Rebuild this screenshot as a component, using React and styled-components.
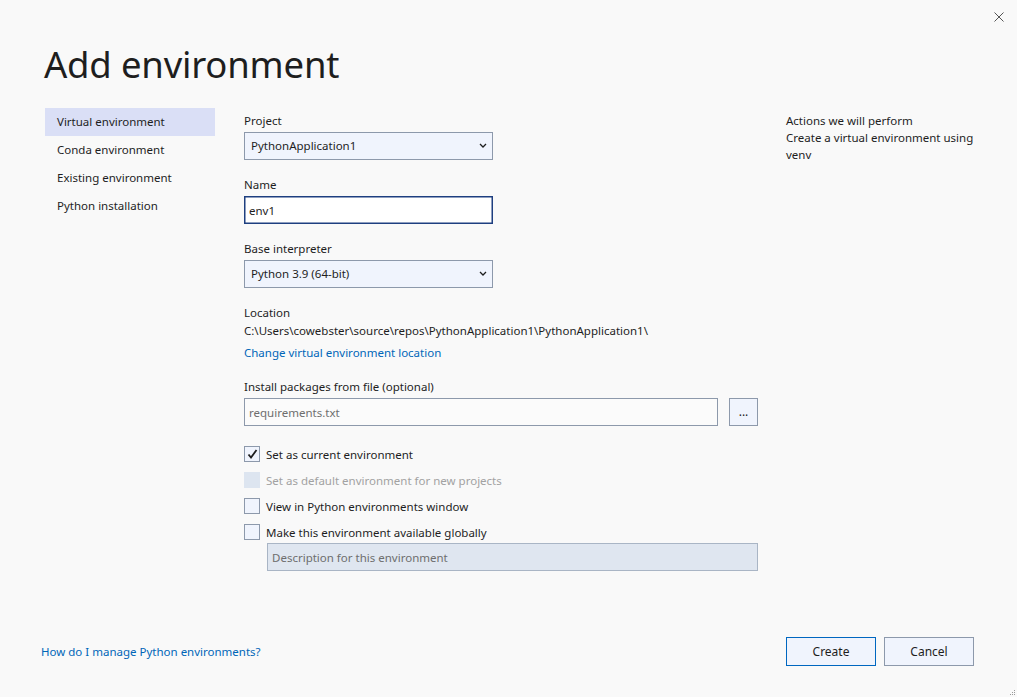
import React from "react";
import styled, { createGlobalStyle } from "styled-components";

const GlobalStyle = createGlobalStyle`
  html, body {
    margin: 0;
    padding: 0;
    background: #f9f9f9;
  }
  body {
    font-family: "Segoe UI", "Noto Sans", "Open Sans", sans-serif;
    color: #1e1e1e;
  }
`;

const Window = styled.div`
  position: relative;
  width: 1017px;
  height: 697px;
  box-sizing: border-box;
  display: flex;
  flex-direction: column;
  background: #f9f9f9;
  overflow: hidden;
  font-size: 11.5px;
`;

const TopBar = styled.div`
  height: 36px;
  display: flex;
  justify-content: flex-end;
  align-items: center;
  padding-right: 13px;
  padding-bottom: 2px;
  box-sizing: border-box;
`;

const CloseButton = styled.button`
  width: 10px;
  height: 10px;
  padding: 0;
  border: none;
  background: none;
  display: flex;
  cursor: pointer;
`;

const Title = styled.h1`
  margin: 5px 0 0 44px;
  font-size: 36.5px;
  font-weight: 400;
  line-height: 46px;
  height: 46px;
  color: #1e1e1e;
  letter-spacing: -0.2px;
`;

const Body = styled.div`
  display: flex;
  margin-top: 21px;
  padding-left: 45px;
`;

const Sidebar = styled.nav`
  width: 170px;
  display: flex;
  flex-direction: column;
`;

const NavItem = styled.div`
  height: 28px;
  line-height: 28px;
  padding-left: 12px;
  background: ${(p) => (p.$active ? "#dadff6" : "transparent")};
  color: #1e1e1e;
`;

const Form = styled.div`
  width: 514px;
  margin-left: 29px;
  display: flex;
  flex-direction: column;
  padding-top: 5px;
`;

const Group = styled.div`
  display: flex;
  flex-direction: column;
  margin-top: ${(p) => p.$top ?? 0}px;
  margin-bottom: ${(p) => p.$gap ?? 17}px;
`;

const Label = styled.div`
  line-height: 16px;
  margin-bottom: ${(p) => (p.$tight ? 0 : 3)}px;
`;

const Select = styled.div`
  width: 249px;
  height: 28px;
  box-sizing: border-box;
  border: 1px solid #8d99ab;
  background: #f0f4fd;
  display: flex;
  align-items: center;
  justify-content: space-between;
  padding: 0 5px 2px 6px;
`;

const TextInput = styled.div`
  width: ${(p) => p.$width}px;
  height: 28px;
  box-sizing: border-box;
  border: 1px solid ${(p) => (p.$focused ? "#1e3f80" : p.$disabled ? "#a9b5c5" : "#8d99ab")};
  ${(p) => p.$focused && "box-shadow: inset 0 0 0 0.5px #1e3f80;"}
  background: ${(p) => (p.$disabled ? "#dfe6f0" : p.$focused ? "#ffffff" : "#fbfbfb")};
  display: flex;
  align-items: center;
  padding-left: 4px;
  color: ${(p) => (p.$placeholder ? "#6e6e6e" : "#1e1e1e")};
`;

const PathText = styled.div`
  line-height: 16px;
  margin-top: 2px;
`;

const Link = styled.a`
  color: #0066b8;
  text-decoration: none;
  line-height: 16px;
  cursor: pointer;
`;

const LinkRow = styled.div`
  margin-top: 6px;
  line-height: 16px;
`;

const Row = styled.div`
  display: flex;
  align-items: center;
  gap: 11px;
`;

const BrowseButton = styled.button`
  width: 29px;
  height: 28px;
  box-sizing: border-box;
  border: 1px solid #8d99ab;
  background: #f0f4fd;
  padding: 0;
  font-family: inherit;
  font-size: 12px;
  color: #1e1e1e;
  line-height: 1;
`;

const Checks = styled.div`
  display: flex;
  flex-direction: column;
  margin-top: 15px;
`;

const CheckRow = styled.div`
  height: 26px;
  display: flex;
  align-items: center;
  gap: 6px;
  color: ${(p) => (p.$disabled ? "#a2a2a2" : "#1e1e1e")};
`;

const Box = styled.span`
  width: 16px;
  height: 16px;
  box-sizing: border-box;
  border: ${(p) => (p.$disabled ? "none" : "1px solid #8d99ab")};
  background: ${(p) => (p.$disabled ? "#dde5f0" : "#f0f4fd")};
  display: flex;
  align-items: center;
  justify-content: center;
`;

const Indent = styled.div`
  padding-left: 23px;
  margin-top: -2px;
`;

const Side = styled.aside`
  width: 196px;
  margin-left: 28px;
  padding-top: 4px;
  line-height: 17px;
`;

const Footer = styled.div`
  margin-top: auto;
  display: flex;
  align-items: center;
  justify-content: space-between;
  padding: 0 43px 31px 41px;
`;

const Buttons = styled.div`
  display: flex;
  gap: 8px;
`;

const DialogButton = styled.button`
  width: 90px;
  height: 29px;
  box-sizing: border-box;
  border: 1px solid ${(p) => (p.$primary ? "#0067c0" : "#8d99ab")};
  background: #f0f4fd;
  font-family: inherit;
  font-size: 12px;
  color: #1e1e1e;
  padding: 0;
`;

const Grip = styled.svg`
  position: absolute;
  right: 1px;
  bottom: 1px;
`;

const Chevron = () => (
  <svg width="8" height="5" viewBox="0 0 8 5">
    <polyline points="1,1 4,4 7,1" fill="none" stroke="#1e1e1e" strokeWidth="1.3" />
  </svg>
);

const Check = () => (
  <svg width="11" height="10" viewBox="0 0 11 10">
    <polyline points="1.5,5.5 4,8.5 9.5,1" fill="none" stroke="#1e1e1e" strokeWidth="1.8" />
  </svg>
);

const navItems = ["Virtual environment", "Conda environment", "Existing environment", "Python installation"];

const checks = [
  { label: "Set as current environment", checked: true },
  { label: "Set as default environment for new projects", disabled: true },
  { label: "View in Python environments window" },
  { label: "Make this environment available globally" },
];

export default function App() {
  return (
    <>
      <GlobalStyle />
      <Window>
        <TopBar>
          <CloseButton aria-label="Close">
            <svg width="10" height="10" viewBox="0 0 10 10">
              <path d="M0.5 0.5 L9.5 9.5 M9.5 0.5 L0.5 9.5" stroke="#555" strokeWidth="1" />
            </svg>
          </CloseButton>
        </TopBar>
        <Title>Add environment</Title>

        <Body>
          <Sidebar>
            {navItems.map((n, i) => (
              <NavItem key={n} $active={i === 0}>{n}</NavItem>
            ))}
          </Sidebar>

          <Form>
            <Group>
              <Label>Project</Label>
              <Select>
                <span>PythonApplication1</span>
                <Chevron />
              </Select>
            </Group>
            <Group>
              <Label>Name</Label>
              <TextInput $width={249} $focused>env1</TextInput>
            </Group>
            <Group>
              <Label>Base interpreter</Label>
              <Select>
                <span>Python 3.9 (64-bit)</span>
                <Chevron />
              </Select>
            </Group>
            <Group $gap={0}>
              <Label $tight>Location</Label>
              <PathText>C:\Users\cowebster\source\repos\PythonApplication1\PythonApplication1\</PathText>
              <LinkRow>
                <Link>Change virtual environment location</Link>
              </LinkRow>
            </Group>
            <Group $gap={0} $top={18}>
              <Label>Install packages from file (optional)</Label>
              <Row>
                <TextInput $width={475} $placeholder>requirements.txt</TextInput>
                <BrowseButton>...</BrowseButton>
              </Row>
            </Group>

            <Checks>
              {checks.map((c) => (
                <CheckRow key={c.label} $disabled={c.disabled}>
                  <Box $disabled={c.disabled}>{c.checked && <Check />}</Box>
                  <span>{c.label}</span>
                </CheckRow>
              ))}
              <Indent>
                <TextInput $width={491} $disabled $placeholder>Description for this environment</TextInput>
              </Indent>
            </Checks>
          </Form>

          <Side>
            <div>Actions we will perform</div>
            <div>Create a virtual environment using venv</div>
          </Side>
        </Body>

        <Footer>
          <Link>How do I manage Python environments?</Link>
          <Buttons>
            <DialogButton $primary>Create</DialogButton>
            <DialogButton>Cancel</DialogButton>
          </Buttons>
        </Footer>

        <Grip width="7" height="7" viewBox="0 0 7 7">
          <rect x="5" y="1" width="1" height="1" fill="#9a9a9a" />
          <rect x="3" y="3" width="1" height="1" fill="#9a9a9a" />
          <rect x="5" y="3" width="1" height="1" fill="#9a9a9a" />
          <rect x="1" y="5" width="1" height="1" fill="#9a9a9a" />
          <rect x="3" y="5" width="1" height="1" fill="#9a9a9a" />
          <rect x="5" y="5" width="1" height="1" fill="#9a9a9a" />
        </Grip>
      </Window>
    </>
  );
}
